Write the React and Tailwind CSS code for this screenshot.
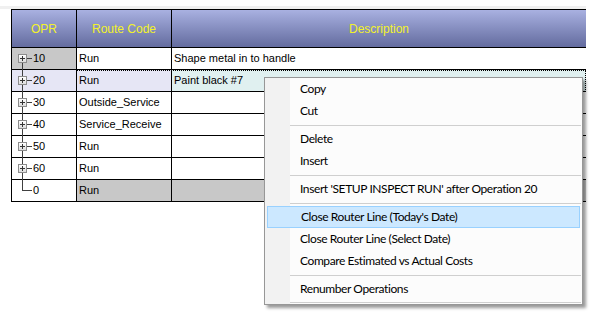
import React from 'react';

const rows = [
  { opr: '10', code: 'Run', desc: 'Shape metal in to handle', oprBg: 'bg-[#c8c8c8]', codeBg: 'bg-white', descBg: 'bg-white', tree: 'first' },
  { opr: '20', code: 'Run', desc: 'Paint black #7', oprBg: 'bg-[#e6e6f5]', codeBg: 'bg-[#e6e6f5]', descBg: 'bg-[#e0f0f0]', tree: 'mid', selected: true },
  { opr: '30', code: 'Outside_Service', desc: '', oprBg: 'bg-white', codeBg: 'bg-white', descBg: 'bg-white', tree: 'mid' },
  { opr: '40', code: 'Service_Receive', desc: '', oprBg: 'bg-white', codeBg: 'bg-white', descBg: 'bg-white', tree: 'mid' },
  { opr: '50', code: 'Run', desc: '', oprBg: 'bg-white', codeBg: 'bg-white', descBg: 'bg-white', tree: 'mid' },
  { opr: '60', code: 'Run', desc: '', oprBg: 'bg-white', codeBg: 'bg-white', descBg: 'bg-white', tree: 'mid' },
  { opr: '0', code: 'Run', desc: '', oprBg: 'bg-white', codeBg: 'bg-[#c8c8c8]', descBg: 'bg-[#c8c8c8]', tree: 'last' },
];

const menu = [
  { label: 'Copy' },
  { label: 'Cut' },
  { sep: true },
  { label: 'Delete' },
  { label: 'Insert' },
  { sep: true },
  { label: "Insert 'SETUP INSPECT RUN' after Operation 20" },
  { sep: true },
  { label: "Close Router Line (Today's Date)", active: true },
  { label: 'Close Router Line (Select Date)' },
  { label: 'Compare Estimated vs Actual Costs' },
  { sep: true },
  { label: 'Renumber Operations' },
  { sep: true, last: true },
];

function Expander() {
  return (
    <div className="relative z-10 w-[9px] h-[9px] border border-[#8c8c8c] bg-gradient-to-b from-white to-[#dcdcdc] flex items-center justify-center">
      <div className="absolute w-[5px] h-px bg-[#333]" />
      <div className="absolute w-px h-[5px] bg-[#333]" />
    </div>
  );
}

function OprCell({ row }) {
  return (
    <div className={`relative w-[65px] h-full border-r border-black ${row.oprBg} flex items-center`}>
      {/* tree lines */}
      {row.tree === 'first' && <div className="absolute left-[10px] top-[11px] bottom-[-1px] w-px bg-[#404040]" />}
      {row.tree === 'mid' && <div className="absolute left-[10px] top-[-1px] bottom-[-1px] w-px bg-[#404040]" />}
      {row.tree === 'last' && <div className="absolute left-[10px] top-[-1px] h-[12px] w-px bg-[#404040]" />}
      <div className="ml-[6px] w-[9px] flex items-center justify-center">
        {row.tree !== 'last' && <Expander />}
      </div>
      <div className={`h-px bg-[#404040] ${row.tree === 'last' ? 'w-[10px] -ml-[5px]' : 'w-[5px]'}`} />
      <span className="ml-px">{row.opr}</span>
    </div>
  );
}

export default function App() {
  return (
    <div className="relative w-[599px] h-[318px] bg-white overflow-hidden text-black" style={{ fontFamily: '"Liberation Sans", Arial, sans-serif' }}>
      <div className="h-[6px]" />
      <div className="h-[3px] bg-[#f0f0f0] w-[586px]" />

      {/* Grid */}
      <div className="ml-[11px] w-[575px] text-[11px]">
        {/* Header */}
        <div className="flex h-[39px] border-y border-black border-l bg-gradient-to-b from-[#a9b1e1] to-[#646c9f] text-[#f2f22a] text-[12px]">
          <div className="w-[65px] border-r border-black flex items-center justify-center">OPR</div>
          <div className="w-[95px] border-r border-black flex items-center justify-center">Route Code</div>
          <div className="flex-1 flex items-center justify-center">Description</div>
        </div>

        {/* Rows */}
        {rows.map((row) => (
          <div
            key={row.opr}
            className={`flex h-[22px] border-b border-l border-black ${row.selected ? 'outline outline-1 outline-dotted outline-black -outline-offset-1' : ''}`}
          >
            <OprCell row={row} />
            <div className={`w-[95px] h-full border-r border-black ${row.codeBg} flex items-center pl-[2px]`}>{row.code}</div>
            <div className={`flex-1 h-full ${row.descBg} flex items-center pl-[2px]`}>{row.desc}</div>
          </div>
        ))}
      </div>

      {/* Context menu */}
      <div
        className="absolute left-[264px] top-[77px] w-[319px] border border-[#979797] bg-[#fcfcfc] shadow-[3px_3px_3px_rgba(0,0,0,0.4)] text-[12px] tracking-[-0.4px]"
        style={{ fontFamily: 'Lato, "Noto Sans", sans-serif' }}
      >
        <div className="absolute left-0 top-0 bottom-0 w-[25px] bg-[#f2f2f2]" />
        {menu.map((item, i) =>
          item.sep ? (
            <div key={i} className={`relative flex items-center pl-[25px] pr-[1px] ${item.last ? 'h-[4px]' : 'h-[6px]'}`}>
              <div className="h-px w-full bg-[#cfcfcf]" />
            </div>
          ) : (
            <div
              key={i}
              className={`relative mx-[2px] h-[22px] flex items-center pl-[33px] leading-none ${item.active ? 'bg-[#cce8ff] border border-[#99d1ff] pl-[32px]' : ''}`}
            >
              {item.label}
            </div>
          )
        )}
      </div>
    </div>
  );
}
